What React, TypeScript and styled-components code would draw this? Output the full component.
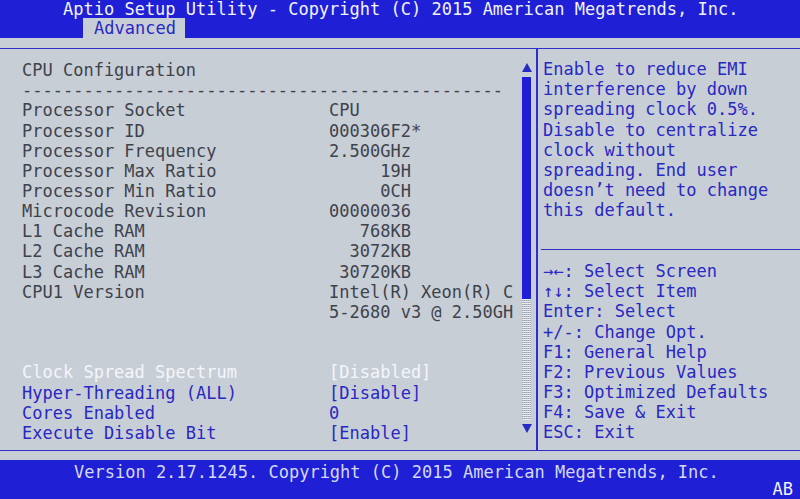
import React from "react";
import styled, { createGlobalStyle } from "styled-components";

const Global = createGlobalStyle`
  html, body { margin: 0; padding: 0; background: #c8ced6; }
  body { font-family: "DejaVu Sans Mono", "Liberation Mono", monospace; }
`;

const BLUE = "#1f1fd6";
const LINE = "#2e2ec8";
const TEXT_BLUE = "#2828c2";
const TEXT_DARK = "#3e424b";
const TEXT_WHITE = "#f4f6fb";

const Screen = styled.div`
  width: 800px;
  height: 499px;
  display: flex;
  flex-direction: column;
  background: #c8ced6;
  font-family: "DejaVu Sans Mono", "Liberation Mono", monospace;
  font-size: 17px;
  overflow: hidden;
`;

const TopBar = styled.header`
  height: 38px;
  background: ${BLUE};
  display: flex;
  flex-direction: column;
`;

const Title = styled.div`
  padding-left: 63px;
  height: 18px;
  line-height: 19px;
  color: #f2f3ff;
  white-space: pre;
`;

const Tab = styled.div`
  margin-left: 83px;
  width: 102px;
  height: 20px;
  box-sizing: border-box;
  padding-left: 11px;
  line-height: 21px;
  background: #c8ced6;
  color: ${TEXT_BLUE};
`;

const Frame = styled.main`
  margin-top: 10px;
  height: 403px;
  box-sizing: border-box;
  border-top: 1.5px solid ${LINE};
  border-bottom: 1.5px solid ${LINE};
  display: flex;
`;

const LeftPanel = styled.section`
  width: 536px;
  display: flex;
`;

const Content = styled.div`
  flex: 1;
  padding: 11px 0 0 22px;
  display: grid;
  grid-template-columns: 307px 1fr;
  grid-auto-rows: 20.17px;
  align-content: start;
  align-items: center;
  line-height: 20px;
`;

const Cell = styled.div<{ $tone: "dark" | "blue" | "white"; $span?: boolean }>`
  white-space: pre;
  color: ${(p) => (p.$tone === "blue" ? TEXT_BLUE : p.$tone === "white" ? TEXT_WHITE : TEXT_DARK)};
  ${(p) => (p.$span ? "grid-column: 1 / span 2;" : "")}
`;

const ScrollColumn = styled.div`
  width: 11px;
  margin-right: 4px;
  padding: 14px 0 17px;
  display: flex;
  flex-direction: column;
  align-items: center;
  box-sizing: border-box;
`;

const Arrow = styled.svg`
  width: 10px;
  height: 9px;
  flex: none;
  fill: ${TEXT_BLUE};
`;

const Thumb = styled.div`
  width: 9px;
  height: 222px;
  margin-top: 5px;
  background: ${BLUE};
`;

const Track = styled.div`
  width: 9px;
  flex: 1;
  margin-bottom: 4px;
  background-color: #b8bec8;
  background-image: repeating-linear-gradient(
      to bottom,
      #e8ecf2 0px,
      #e8ecf2 1px,
      transparent 1px,
      transparent 2px
    ),
    repeating-linear-gradient(
      to right,
      #9aa0ac 0px,
      #9aa0ac 1px,
      transparent 1px,
      transparent 2px
    );
`;

const Divider = styled.div`
  width: 2px;
  background: ${LINE};
`;

const RightPanel = styled.aside`
  flex: 1;
  display: flex;
  flex-direction: column;
`;

const Help = styled.div`
  height: 200px;
  box-sizing: border-box;
  padding: 10px 0 0 5px;
  color: ${TEXT_BLUE};
  line-height: 20.17px;
`;

const HelpLine = styled.div`
  white-space: pre;
`;

const Keys = styled.div`
  margin-left: 3px;
  border-top: 1.5px solid ${LINE};
  padding: 11px 0 0 2px;
  color: ${TEXT_BLUE};
  line-height: 20.17px;
`;

const KeyLine = styled.div`
  white-space: pre;
`;

const BottomBar = styled.footer`
  margin-top: 9px;
  flex: 1;
  background: ${BLUE};
  position: relative;
  color: #d4daf6;
`;

const Version = styled.div`
  padding: 2px 0 0 74px;
  line-height: 20px;
  white-space: pre;
`;

const Badge = styled.div`
  position: absolute;
  right: 7px;
  bottom: 1px;
  color: #f2f4ff;
  line-height: 18px;
`;

type Row = { label: string; value?: string; tone: "dark" | "blue" | "white"; span?: boolean };

const rows: Row[] = [
  { label: "CPU Configuration", tone: "dark", span: true },
  { label: "-----------------------------------------------", tone: "dark", span: true },
  { label: "Processor Socket", value: "CPU", tone: "dark" },
  { label: "Processor ID", value: "000306F2*", tone: "dark" },
  { label: "Processor Frequency", value: "2.500GHz", tone: "dark" },
  { label: "Processor Max Ratio", value: "     19H", tone: "dark" },
  { label: "Processor Min Ratio", value: "     0CH", tone: "dark" },
  { label: "Microcode Revision", value: "00000036", tone: "dark" },
  { label: "L1 Cache RAM", value: "   768KB", tone: "dark" },
  { label: "L2 Cache RAM", value: "  3072KB", tone: "dark" },
  { label: "L3 Cache RAM", value: " 30720KB", tone: "dark" },
  { label: "CPU1 Version", value: "Intel(R) Xeon(R) C", tone: "dark" },
  { label: "", value: "5-2680 v3 @ 2.50GH", tone: "dark" },
  { label: "", value: "", tone: "dark" },
  { label: "", value: "", tone: "dark" },
  { label: "Clock Spread Spectrum", value: "[Disabled]", tone: "white" },
  { label: "Hyper-Threading (ALL)", value: "[Disable]", tone: "blue" },
  { label: "Cores Enabled", value: "0", tone: "blue" },
  { label: "Execute Disable Bit", value: "[Enable]", tone: "blue" },
];

const help = [
  "Enable to reduce EMI",
  "interference by down",
  "spreading clock 0.5%.",
  "Disable to centralize",
  "clock without",
  "spreading. End user",
  "doesn\u2019t need to change",
  "this default.",
];

const keys = [
  "\u2192\u2190: Select Screen",
  "\u2191\u2193: Select Item",
  "Enter: Select",
  "+/-: Change Opt.",
  "F1: General Help",
  "F2: Previous Values",
  "F3: Optimized Defaults",
  "F4: Save & Exit",
  "ESC: Exit",
];

export default function App() {
  return (
    <>
      <Global />
      <Screen>
        <TopBar>
          <Title>Aptio Setup Utility - Copyright (C) 2015 American Megatrends, Inc.</Title>
          <Tab>Advanced</Tab>
        </TopBar>
        <Frame>
          <LeftPanel>
            <Content>
              {rows.map((r, i) =>
                r.span ? (
                  <Cell key={i} $tone={r.tone} $span>
                    {r.label}
                  </Cell>
                ) : (
                  <React.Fragment key={i}>
                    <Cell $tone={r.tone}>{r.label}</Cell>
                    <Cell $tone={r.tone}>{r.value}</Cell>
                  </React.Fragment>
                )
              )}
            </Content>
            <ScrollColumn>
              <Arrow viewBox="0 0 10 9">
                <polygon points="5,0 10,9 0,9" />
              </Arrow>
              <Thumb />
              <Track />
              <Arrow viewBox="0 0 10 9">
                <polygon points="0,0 10,0 5,9" />
              </Arrow>
            </ScrollColumn>
          </LeftPanel>
          <Divider />
          <RightPanel>
            <Help>
              {help.map((h, i) => (
                <HelpLine key={i}>{h}</HelpLine>
              ))}
            </Help>
            <Keys>
              {keys.map((k, i) => (
                <KeyLine key={i}>{k}</KeyLine>
              ))}
            </Keys>
          </RightPanel>
        </Frame>
        <BottomBar>
          <Version>Version 2.17.1245. Copyright (C) 2015 American Megatrends, Inc.</Version>
          <Badge>AB</Badge>
        </BottomBar>
      </Screen>
    </>
  );
}
